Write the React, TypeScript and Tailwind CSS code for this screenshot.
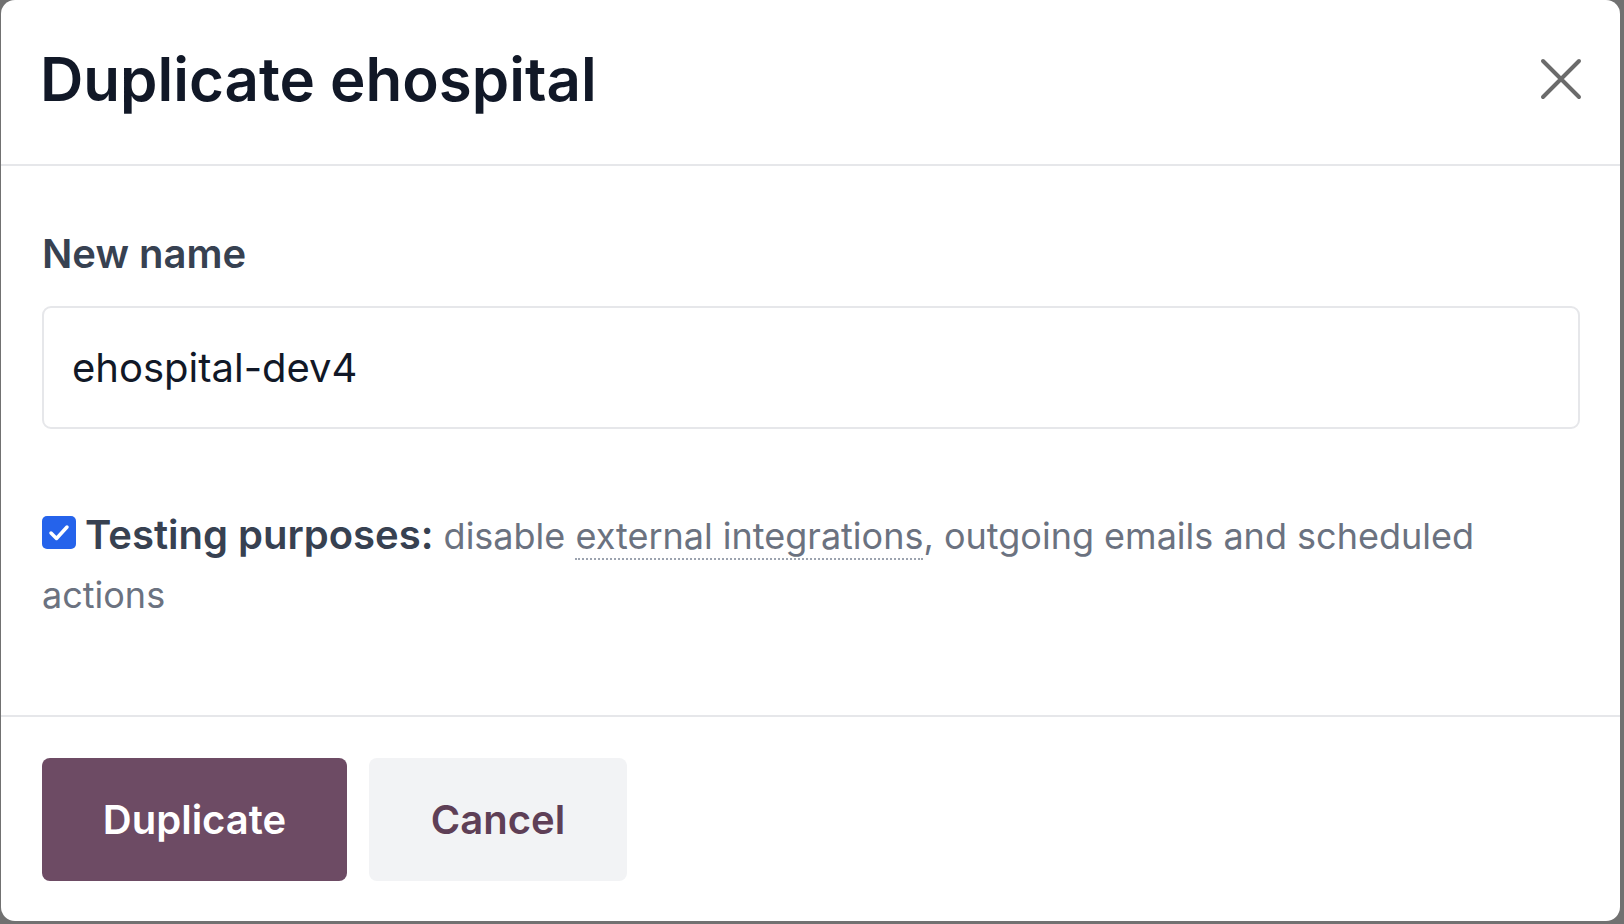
import { useState } from 'react'

// Duplicate database dialog, shown at high zoom
export default function App() {
  const [name, setName] = useState('ehospital-dev4')
  const [testing, setTesting] = useState(true)

  return (
    <div className="min-h-screen bg-[#717171] font-['Inter',sans-serif]">
      <div className="ml-[1px] flex h-[921px] w-[1619px] flex-col overflow-hidden rounded-[14px] bg-white">
        {/* header */}
        <header className="flex h-[166px] shrink-0 items-center justify-between border-b-2 border-[#e6e7ea] pb-[6px] pl-[39px] pr-[38px]">
          <h1 className="text-[60px] font-semibold leading-none text-[#111827]">
            Duplicate ehospital
          </h1>
          <button className="flex h-[42px] w-[42px] items-center justify-center text-[#6b6b6b]">
            <svg viewBox="0 0 42 42" className="h-[42px] w-[42px]" fill="none" stroke="currentColor" strokeWidth={4} strokeLinecap="round">
              <path d="M3 3l36 36M39 3L3 39" />
            </svg>
          </button>
        </header>

        {/* body */}
        <div className="flex flex-1 flex-col pl-[41px] pr-[40px] pt-[68px]">
          <label className="text-[40px] font-semibold leading-none text-[#374151]">New name</label>
          <input
            value={name}
            onChange={(e) => setName(e.target.value)}
            className="mt-[32px] h-[123px] w-full rounded-[9px] border-2 border-[#e6e7ea] px-[28px] text-[40px] text-[#111827] outline-none"
          />
          <p className="mt-[76px] text-[36px] leading-[59px] text-[#6b7280]">
            <span
              onClick={() => setTesting(!testing)}
              className={`mr-[9px] inline-block h-[33px] w-[34px] overflow-hidden rounded-[5px] align-baseline ${testing ? 'bg-[#2563eb]' : 'border-2 border-gray-400 bg-white'}`}
            >
              {testing && (
                <svg viewBox="0 0 34 33" className="h-[33px] w-[34px]" fill="none" stroke="white" strokeWidth={3.5} strokeLinecap="round" strokeLinejoin="round">
                  <path d="M9 17l5.5 5.5L25 11" />
                </svg>
              )}
            </span>
            <span className="text-[40px] font-semibold text-[#374151]">Testing purposes:</span>{' '}
            disable{' '}
            <span className="border-b-2 border-dotted border-[#9ca3af]">external integrations</span>, outgoing emails and scheduled actions
          </p>
        </div>

        {/* footer */}
        <footer className="flex h-[206px] shrink-0 items-start gap-[22px] border-t-2 border-[#e6e7ea] pl-[41px] pt-[41px]">
          <button className="h-[123px] w-[305px] rounded-[8px] bg-[#6d4b64] text-[40px] font-semibold text-white">
            Duplicate
          </button>
          <button className="h-[123px] w-[258px] rounded-[8px] bg-[#f2f3f5] text-[40px] font-semibold text-[#5e3f56]">
            Cancel
          </button>
        </footer>
      </div>
    </div>
  )
}
